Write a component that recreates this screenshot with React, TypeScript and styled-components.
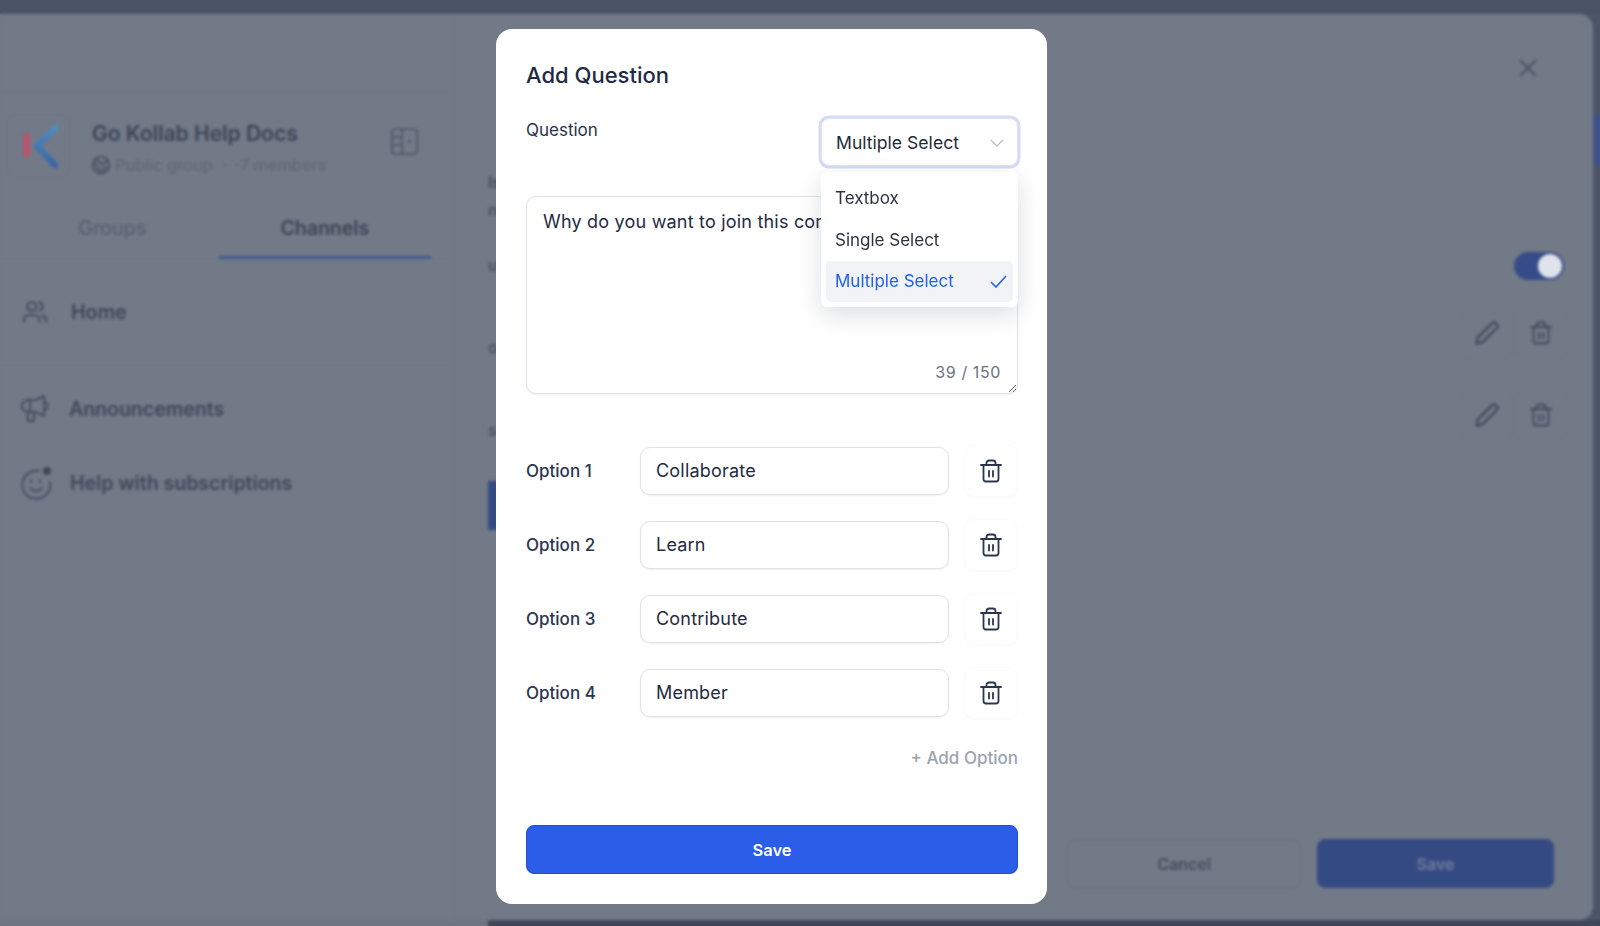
import React from "react";
import styled, { createGlobalStyle } from "styled-components";
import { X, Users, Earth } from "lucide-react";

const GlobalStyle = createGlobalStyle`
  html, body {
    margin: 0;
    height: 100%;
    overflow: hidden;
    font-family: Inter, "Liberation Sans", sans-serif;
  }
  * {
    box-sizing: border-box;
  }
`;

/* page behind the dialog: colours are the dimmed ones, the overlay only blurs */
const Page = styled.div`
  height: 926px;
  display: flex;
  flex-direction: column;
  background: #4c5568;
`;
const TopBand = styled.div`
  height: 14px;
  background: #4a5366;
`;
const Middle = styled.div`
  flex: 1;
  display: flex;
  min-height: 0;
`;
const Window = styled.div`
  flex: 1;
  display: flex;
  background: #727987;
  border-radius: 0 14px 14px 0;
`;
const Rail = styled.div`
  width: 7px;
  padding-top: 101px;
`;
const RailThumb = styled.div`
  height: 50px;
  background: #3e5389;
`;
const BottomBand = styled.div`
  height: 6px;
  display: flex;
  background: #3f4859;
`;
const BottomSidebar = styled.div`
  width: 488px;
  background: #6f7683;
`;

const Sidebar = styled.aside`
  width: 454px;
  flex-shrink: 0;
  border-right: 1px solid #6d7482;
`;
const SideTop = styled.div`
  height: 78px;
  border-bottom: 1px solid #6f7684;
`;
const GroupHeader = styled.div`
  height: 111px;
  padding: 22px 35px 0 6px;
  display: flex;
`;
const LogoBox = styled.div`
  width: 64px;
  height: 64px;
  margin-right: 22px;
  padding-left: 8px;
  border: 1px solid #6f7684;
  border-radius: 10px;
  display: flex;
  align-items: center;
  justify-content: center;
`;
const GroupInfo = styled.div`
  flex: 1;
  padding-top: 7px;
`;
const GroupName = styled.div`
  font-size: 21px;
  line-height: 26px;
  font-weight: 600;
  color: #3c4455;
`;
const GroupMeta = styled.div`
  margin-top: 7px;
  display: flex;
  align-items: center;
  gap: 4px;
  font-size: 16.4px;
  line-height: 22px;
  color: #5f6675;
  margin-left: -1px;
`;
const MetaDot = styled.span`
  margin: 0 4px 0 6px;
`;
const PanelIcon = styled.svg`
  margin-top: 14px;
`;
const Tabs = styled.div`
  height: 56px;
  display: flex;
  padding-left: 6px;
  border-bottom: 1px solid #6f7684;
`;
const Tab = styled.div<{ $active?: boolean }>`
  width: 212.5px;
  height: 56px;
  display: flex;
  align-items: center;
  justify-content: center;
  padding-bottom: 3px;
  font-size: 19.5px;
  font-weight: ${(p) => (p.$active ? 600 : 500)};
  color: ${(p) => (p.$active ? "#3c4455" : "#596070")};
  border-bottom: 3px solid ${(p) => (p.$active ? "#3f5b93" : "transparent")};
`;
const HomeRow = styled.div`
  height: 107px;
  padding-left: 22px;
  display: flex;
  align-items: center;
  gap: 23px;
  border-bottom: 1px solid #6f7684;
`;
const NavList = styled.div`
  padding: 25px 0 0 20px;
  display: flex;
  flex-direction: column;
  gap: 38px;
`;
const NavItem = styled.div<{ $gap: number }>`
  height: 36px;
  display: flex;
  align-items: center;
  gap: ${(p) => p.$gap}px;
`;
const NavText = styled.span`
  font-size: 19.5px;
  font-weight: 600;
  color: #3f4758;
`;

const Main = styled.main`
  flex: 1;
  display: flex;
  flex-direction: column;
`;
const MainHeader = styled.div`
  height: 158px;
  padding: 39px 50px 0 0;
  display: flex;
  justify-content: flex-end;
  align-items: flex-start;
  border-bottom: 1px solid #717886;
  color: #4c5465;
`;
const Content = styled.div`
  flex: 1;
  display: flex;
  justify-content: space-between;
  padding: 0 26px 0 34px;
`;
const LeftCol = styled.div`
  display: flex;
  flex-direction: column;
  align-items: flex-start;
`;
const Fragment = styled.div<{ $gap: number; $bold?: boolean }>`
  margin-top: ${(p) => p.$gap}px;
  font-size: 16px;
  line-height: 20px;
  font-weight: ${(p) => (p.$bold ? 700 : 500)};
  color: #454d5e;
`;
const BlueBlock = styled.div`
  margin-top: 41px;
  width: 120px;
  height: 49px;
  background: #344a82;
`;
const RightCol = styled.div`
  display: flex;
  flex-direction: column;
  align-items: flex-end;
`;
const Toggle = styled.div`
  margin: 80px 3px 0 0;
  width: 50px;
  height: 28px;
  padding: 2px;
  border-radius: 14px;
  background: #364c88;
  display: flex;
  justify-content: flex-end;
`;
const ToggleKnob = styled.div`
  width: 24px;
  height: 24px;
  border-radius: 50%;
  background: #dfe3ea;
`;
const IconRow = styled.div<{ $gap: number }>`
  margin-top: ${(p) => p.$gap}px;
  display: flex;
  gap: 2px;
`;
const GhostIcon = styled.div`
  width: 52px;
  height: 52px;
  display: flex;
  align-items: center;
  justify-content: center;
  border: 1px solid #707785;
  border-radius: 10px;
`;
const MainFooter = styled.div`
  padding: 0 39px 32px 0;
  display: flex;
  justify-content: flex-end;
  gap: 16px;
`;
const FooterButton = styled.div<{ $primary?: boolean }>`
  width: ${(p) => (p.$primary ? 237 : 234)}px;
  height: 49px;
  display: flex;
  align-items: center;
  justify-content: center;
  font-size: 16px;
  font-weight: 600;
  border-radius: 8px;
  border: 1px solid ${(p) => (p.$primary ? "#344a82" : "#6a7180")};
  background: ${(p) => (p.$primary ? "#344a82" : "transparent")};
  color: ${(p) => (p.$primary ? "#6f7d9f" : "#474e5e")};
`;

/* dialog */
const Overlay = styled.div`
  position: fixed;
  inset: 0;
  display: flex;
  align-items: flex-start;
  padding: 29px 0 0 496px;
  backdrop-filter: blur(1.6px);
`;
const Modal = styled.div`
  width: 551px;
  height: 875px;
  padding: 30px 29px 30px 30px;
  background: #fff;
  border-radius: 16px;
  color: #1f2a44;
`;
const Title = styled.h2`
  margin: 0;
  font-size: 22px;
  line-height: 32px;
  font-weight: 500;
  color: #1f2a44;
`;
const QuestionRow = styled.div`
  margin-top: 27px;
  display: flex;
  justify-content: space-between;
  align-items: flex-start;
`;
const FieldLabel = styled.label`
  font-size: 17px;
  line-height: 24px;
  color: #28334d;
`;
const SelectWrap = styled.div`
  position: relative;
  z-index: 2;
  width: 197px;
`;
const SelectBox = styled.div`
  height: 48px;
  padding: 1px 13px 0 14px;
  display: flex;
  align-items: center;
  justify-content: space-between;
  font-size: 17.6px;
  color: #1f2937;
  background: #fff;
  border: 1px solid #e1e5f0;
  border-radius: 8px;
  box-shadow: 0 0 0 2.5px #d2dcf7;
`;
const Menu = styled.div`
  position: absolute;
  top: 54px;
  left: 0;
  width: 197px;
  padding: 5px;
  background: #fff;
  border-radius: 6px;
  box-shadow: 0 8px 24px rgba(17, 24, 39, 0.14);
`;
const MenuItem = styled.div<{ $selected?: boolean }>`
  height: 41.8px;
  padding: 0 6px 0 9px;
  display: flex;
  align-items: center;
  justify-content: space-between;
  font-size: 17px;
  border-radius: 5px;
  color: ${(p) => (p.$selected ? "#2060f0" : "#2c3340")};
  background: ${(p) => (p.$selected ? "#f2f3f7" : "transparent")};
`;
const TextareaWrap = styled.div`
  position: relative;
  margin-top: 30px;
`;
const Textarea = styled.textarea`
  display: block;
  width: 492px;
  height: 198px;
  padding: 13px 16px;
  font-family: inherit;
  font-size: 18px;
  letter-spacing: 0.2px;
  line-height: 24px;
  color: #1f2a44;
  border: 1px solid #e0e2e8;
  border-radius: 10px;
  box-shadow: 0 1px 2px rgba(17, 24, 39, 0.06);
  outline: none;
`;
const Counter = styled.span`
  position: absolute;
  right: 17px;
  bottom: 12px;
  font-size: 16px;
  letter-spacing: 0.6px;
  color: #6b7280;
`;
const OptionList = styled.div`
  margin-top: 50.5px;
  display: flex;
  flex-direction: column;
  gap: 22px;
`;
const OptionRow = styled.div`
  height: 52px;
  display: flex;
  align-items: center;
`;
const OptionLabel = styled.label`
  width: 114px;
  font-size: 17px;
  font-weight: 500;
  color: #2a3650;
`;
const OptionInput = styled.input`
  width: 309px;
  height: 48px;
  padding: 0 15px;
  font-family: inherit;
  font-size: 18px;
  letter-spacing: 0.2px;
  color: #1f2a44;
  border: 1px solid #e0e2e8;
  border-radius: 10px;
  box-shadow: 0 1px 2px rgba(17, 24, 39, 0.06);
  outline: none;
`;
const DeleteButton = styled.button`
  margin-left: auto;
  width: 54px;
  height: 52px;
  padding: 0;
  display: flex;
  align-items: center;
  justify-content: center;
  background: #fff;
  border: 1px solid #fbfbfc;
  border-radius: 10px;
  box-shadow: 0 1px 2px rgba(17, 24, 39, 0.02);
`;
const AddOption = styled.div`
  margin-top: 27.5px;
  text-align: right;
  font-size: 17px;
  line-height: 24px;
  font-weight: 500;
  color: #9ca3af;
`;
const SaveButton = styled.button`
  margin-top: 55px;
  width: 100%;
  height: 49px;
  font-family: inherit;
  font-size: 16.5px;
  font-weight: 600;
  color: #fff;
  background: #2b5de8;
  border: 1px solid #1d4ed8;
  border-radius: 8px;
`;

const TrashIcon = ({ color = "#2a3650" }: { color?: string }) => (
  <svg width="24" height="24" viewBox="0 0 24 24" fill="none" stroke={color} strokeWidth="1.8" strokeLinecap="round" strokeLinejoin="round">
    <path d="M2 6h20" />
    <path d="M7.5 6V4A2.5 2.5 0 0 1 10 1.5h4A2.5 2.5 0 0 1 16.5 4v2" />
    <path d="M4.5 6v14A2.5 2.5 0 0 0 7 22.5h10a2.5 2.5 0 0 0 2.5-2.5V6" />
    <path d="M10 12v5.5M14 12v5.5" />
  </svg>
);

const PencilIcon = () => (
  <svg width="28" height="28" viewBox="0 0 24 24" fill="none" stroke="#414959" strokeWidth="2" strokeLinecap="round" strokeLinejoin="round">
    <path d="M3 21l1-5L16.5 3.5a2.1 2.1 0 0 1 3 0l1 1a2.1 2.1 0 0 1 0 3L8 20z" />
  </svg>
);

const KLogo = () => (
  <svg width="40" height="44" viewBox="0 0 40 44">
    <defs>
      <linearGradient id="kBlue" x1="0" y1="0" x2="0" y2="1">
        <stop offset="0" stopColor="#4d8cc0" />
        <stop offset="1" stopColor="#3a66aa" />
      </linearGradient>
    </defs>
    <rect x="1" y="9" width="7" height="24" rx="2" fill="#b5566f" />
    <path d="M33 4L15 22l18 19" fill="none" stroke="url(#kBlue)" strokeWidth="6.5" strokeLinecap="round" strokeLinejoin="round" />
  </svg>
);

const SidePanelGlyph = () => (
  <PanelIcon width="27" height="27" viewBox="0 0 27 27" fill="none" stroke="#4c5465" strokeWidth="1.6">
    <rect x="1" y="1" width="25" height="25" rx="3" />
    <path d="M11 1v25M1 9h10M1 17h10" />
    <circle cx="18.5" cy="13.5" r="1.5" fill="#4c5465" stroke="none" />
  </PanelIcon>
);

const MegaphoneGlyph = () => (
  <svg width="30" height="30" viewBox="0 0 30 30" fill="none" stroke="#454d5e" strokeWidth="2" strokeLinejoin="round">
    <path d="M2 12a6 6 0 0 1 6-6h8l8-4v20l-8-4H8a6 6 0 0 1-6-6z" />
    <path d="M24 8a4 4 0 0 1 0 8" />
    <path d="M8 18v9h6v-9" />
    <path d="M10 6v12" />
  </svg>
);

const SmileGlyph = () => (
  <svg width="34" height="36" viewBox="0 0 34 36" fill="none" stroke="#454d5e" strokeWidth="2" strokeLinecap="round">
    <path d="M30 17a14 14 0 1 1-11-11" />
    <path d="M10 23c3 4 9 4 12 0" />
    <path d="M11 15v2M20 15v2" />
    <circle cx="27" cy="6" r="4" fill="#3f4758" stroke="none" />
  </svg>
);

const options = ["Collaborate", "Learn", "Contribute", "Member"];

const App = () => {
  return (
    <>
      <GlobalStyle />
      <Page>
        <TopBand />
        <Middle>
          <Window>
            <Sidebar>
              <SideTop />
              <GroupHeader>
                <LogoBox>
                  <KLogo />
                </LogoBox>
                <GroupInfo>
                  <GroupName>Go Kollab Help Docs</GroupName>
                  <GroupMeta>
                    <Earth size={20} color="#454d5e" />
                    Public group<MetaDot>·</MetaDot>·7 members
                  </GroupMeta>
                </GroupInfo>
                <SidePanelGlyph />
              </GroupHeader>
              <Tabs>
                <Tab>Groups</Tab>
                <Tab $active>Channels</Tab>
              </Tabs>
              <HomeRow>
                <Users size={26} color="#454d5e" />
                <NavText>Home</NavText>
              </HomeRow>
              <NavList>
                <NavItem $gap={19}>
                  <MegaphoneGlyph />
                  <NavText>Announcements</NavText>
                </NavItem>
                <NavItem $gap={16}>
                  <SmileGlyph />
                  <NavText>Help with subscriptions</NavText>
                </NavItem>
              </NavList>
            </Sidebar>
            <Main>
              <MainHeader>
                <X size={30} strokeWidth={1.8} />
              </MainHeader>
              <Content>
                <LeftCol>
                  <Fragment $gap={0} $bold>Is</Fragment>
                  <Fragment $gap={8}>n</Fragment>
                  <Fragment $gap={35}>u</Fragment>
                  <Fragment $gap={62}>oi</Fragment>
                  <Fragment $gap={63}>s</Fragment>
                  <BlueBlock />
                </LeftCol>
                <RightCol>
                  <Toggle>
                    <ToggleKnob />
                  </Toggle>
                  <IconRow $gap={27}>
                    <GhostIcon><PencilIcon /></GhostIcon>
                    <GhostIcon><TrashIcon color="#414959" /></GhostIcon>
                  </IconRow>
                  <IconRow $gap={30}>
                    <GhostIcon><PencilIcon /></GhostIcon>
                    <GhostIcon><TrashIcon color="#414959" /></GhostIcon>
                  </IconRow>
                </RightCol>
              </Content>
              <MainFooter>
                <FooterButton>Cancel</FooterButton>
                <FooterButton $primary>Save</FooterButton>
              </MainFooter>
            </Main>
          </Window>
          <Rail>
            <RailThumb />
          </Rail>
        </Middle>
        <BottomBand>
          <BottomSidebar />
        </BottomBand>
      </Page>
      <Overlay>
        <Modal>
          <Title>Add Question</Title>
          <QuestionRow>
            <FieldLabel>Question</FieldLabel>
            <SelectWrap>
              <SelectBox>
                Multiple Select
                <svg width="14" height="8" viewBox="0 0 14 8" fill="none" stroke="#b6bbc4" strokeWidth="1.2">
                  <path d="M1 1l6 6 6-6" />
                </svg>
              </SelectBox>
              <Menu>
                <MenuItem>Textbox</MenuItem>
                <MenuItem>Single Select</MenuItem>
                <MenuItem $selected>
                  Multiple Select
                  <svg width="17" height="13" viewBox="0 0 17 13" fill="none" stroke="#2060f0" strokeWidth="1.6">
                    <path d="M1 7l5 5L16 1" />
                  </svg>
                </MenuItem>
              </Menu>
            </SelectWrap>
          </QuestionRow>
          <TextareaWrap>
            <Textarea readOnly defaultValue="Why do you want to join this community?" />
            <Counter>39 / 150</Counter>
          </TextareaWrap>
          <OptionList>
            {options.map((option, i) => (
              <OptionRow key={option}>
                <OptionLabel>Option {i + 1}</OptionLabel>
                <OptionInput readOnly defaultValue={option} />
                <DeleteButton>
                  <TrashIcon />
                </DeleteButton>
              </OptionRow>
            ))}
          </OptionList>
          <AddOption>+ Add Option</AddOption>
          <SaveButton>Save</SaveButton>
        </Modal>
      </Overlay>
    </>
  );
};

export default App;
